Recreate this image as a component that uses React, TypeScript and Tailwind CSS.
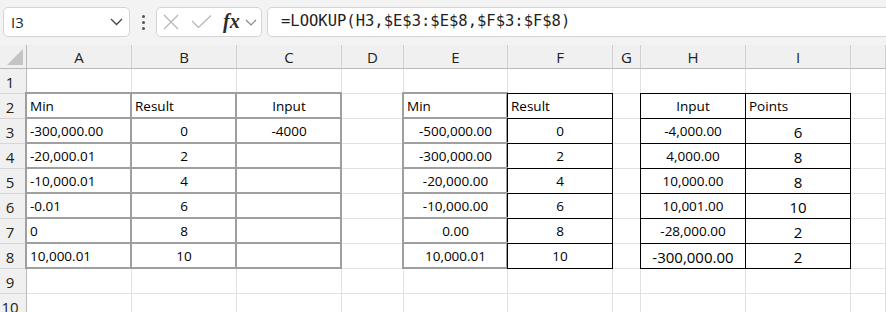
import { Fragment } from "react";

type Cell = { t?: string; a?: "l" | "c"; b?: "g" | "k"; big?: boolean; pts?: boolean };

const LETTERS = ["A", "B", "C", "D", "E", "F", "G", "H", "I", ""];

const g = (t: string, a: "l" | "c" = "l"): Cell => ({ t, a, b: "g" });
const k = (t: string, a: "l" | "c" = "c", pts = false, big = false): Cell => ({ t, a, b: "k", pts, big });
const e: Cell = {};

const rows: Cell[][] = [
  [e, e, e, e, e, e, e, e, e, e],
  [g("Min"), g("Result"), g("Input", "c"), e, g("Min"), k("Result", "l"), e, k("Input"), k("Points", "l"), e],
  [g("-300,000.00"), g("0", "c"), g("-4000", "c"), e, g("-500,000.00", "c"), k("0"), e, k("-4,000.00"), k("6", "c", true), e],
  [g("-20,000.01"), g("2", "c"), g("", "c"), e, g("-300,000.00", "c"), k("2"), e, k("4,000.00"), k("8", "c", true), e],
  [g("-10,000.01"), g("4", "c"), g("", "c"), e, g("-20,000.00", "c"), k("4"), e, k("10,000.00"), k("8", "c", true), e],
  [g("-0.01"), g("6", "c"), g("", "c"), e, g("-10,000.00", "c"), k("6"), e, k("10,001.00"), k("10", "c", true), e],
  [g("0"), g("8", "c"), g("", "c"), e, g("0.00", "c"), k("8"), e, k("-28,000.00"), k("2", "c", true), e],
  [g("10,000.01"), g("10", "c"), g("", "c"), e, g("10,000.01", "c"), k("10"), e, k("-300,000.00", "c", false, true), k("2", "c", true), e],
  [e, e, e, e, e, e, e, e, e, e],
  [e, e, e, e, e, e, e, e, e, e],
];

function GridCell({ c }: { c: Cell }) {
  const size = c.pts || c.big ? "text-[15px] items-end pb-[1px]" : "text-[13.5px] items-center";
  return (
    <div
      className={`relative h-[25px] border-r border-b border-[#e1e1e1] flex px-[3px] leading-[20px] text-black whitespace-nowrap ${size} ${
        c.a === "c" ? "justify-center" : "justify-start"
      }`}
    >
      {c.t}
      {c.b === "g" && (
        <div className="absolute -left-[2px] -top-[2px] -right-px -bottom-px border-2 border-[#9f9f9f] pointer-events-none" />
      )}
      {c.b === "k" && (
        <div className="absolute -left-px -top-px -right-px -bottom-px border border-black pointer-events-none" />
      )}
    </div>
  );
}

function FormulaBar() {
  return (
    <div className="h-[45px] bg-[#f3f3f3] flex items-start pt-[7px] pl-[3px]">
      <div className="w-[127px] h-[30px] bg-white border border-[#d4d4d4] rounded-[5px] flex items-center justify-between pl-[7px] pr-[6px]">
        <span className="text-[15px] text-[#1f1f1f]">I3</span>
        <svg width="13" height="8" viewBox="0 0 13 8">
          <polyline points="1,1 6.5,6.5 12,1" fill="none" stroke="#444" strokeWidth="1.3" />
        </svg>
      </div>
      <div className="w-[26px] h-[30px] flex flex-col items-center justify-center gap-[3px]">
        <span className="w-[3px] h-[3px] bg-[#555] rounded-full" />
        <span className="w-[3px] h-[3px] bg-[#555] rounded-full" />
        <span className="w-[3px] h-[3px] bg-[#555] rounded-full" />
      </div>
      <div className="w-[106px] h-[30px] bg-white border border-[#d4d4d4] rounded-[5px] flex items-center pl-[6px]">
        <svg width="16" height="16" viewBox="0 0 16 16">
          <path d="M1 1 L15 15 M15 1 L1 15" stroke="#b4b4b4" strokeWidth="1.2" />
        </svg>
        <svg width="21" height="14" viewBox="0 0 21 14" className="ml-[12px]">
          <polyline points="1,6 7.5,12.5 20,0.5" fill="none" stroke="#b4b4b4" strokeWidth="1.2" />
        </svg>
        <span
          className="ml-[11px] text-[20px] italic font-bold text-[#2b2b2b] leading-none -mt-[2px]"
          style={{ fontFamily: "'Liberation Serif', serif" }}
        >
          fx
        </span>
        <svg width="12" height="7" viewBox="0 0 12 7" className="ml-[5px]">
          <polyline points="1,1 6,6 11,1" fill="none" stroke="#888" strokeWidth="1.2" />
        </svg>
      </div>
      <div className="ml-[5px] flex-1 -mr-[8px] h-[30px] bg-white border border-[#d4d4d4] rounded-[5px] flex items-center pl-[13px]">
        <span className="text-[15.5px] text-[#1f1f1f]" style={{ fontFamily: "'DejaVu Sans Mono', monospace" }}>
          =LOOKUP(H3,$E$3:$E$8,$F$3:$F$8)
        </span>
      </div>
    </div>
  );
}

export default function App() {
  return (
    <div className="w-[886px] h-[312px] overflow-hidden bg-white" style={{ fontFamily: "'Open Sans', sans-serif" }}>
      <FormulaBar />
      <div className="grid grid-cols-[27px_105px_105px_105px_62px_104px_105px_28px_105px_105px_1fr]">
        <div className="h-[24px] bg-[#f0f0f0] border-r border-b border-[#b9b9b9] flex items-end justify-end pr-[3px] pb-[3px]">
          <svg width="16" height="16" viewBox="0 0 16 16">
            <polygon points="16,0 16,16 0,16" fill="#c4c4c4" />
          </svg>
        </div>
        {LETTERS.map((l, i) => (
          <div
            key={i}
            className="h-[24px] bg-[#f0f0f0] border-r border-b border-r-[#d0d0d0] border-b-[#b9b9b9] flex items-center justify-center text-[15px] text-[#222] pt-[2px]"
          >
            {l}
          </div>
        ))}
        {rows.map((r, ri) => (
          <Fragment key={ri}>
            <div className="h-[25px] bg-[#f0f0f0] border-r border-b border-r-[#b9b9b9] border-b-[#d6d6d6] flex items-center justify-center pr-[6px] pt-[2px] text-[15px] text-[#222]">
              {ri + 1}
            </div>
            {r.map((c, ci) => (
              <GridCell key={ci} c={c} />
            ))}
          </Fragment>
        ))}
      </div>
    </div>
  );
}
